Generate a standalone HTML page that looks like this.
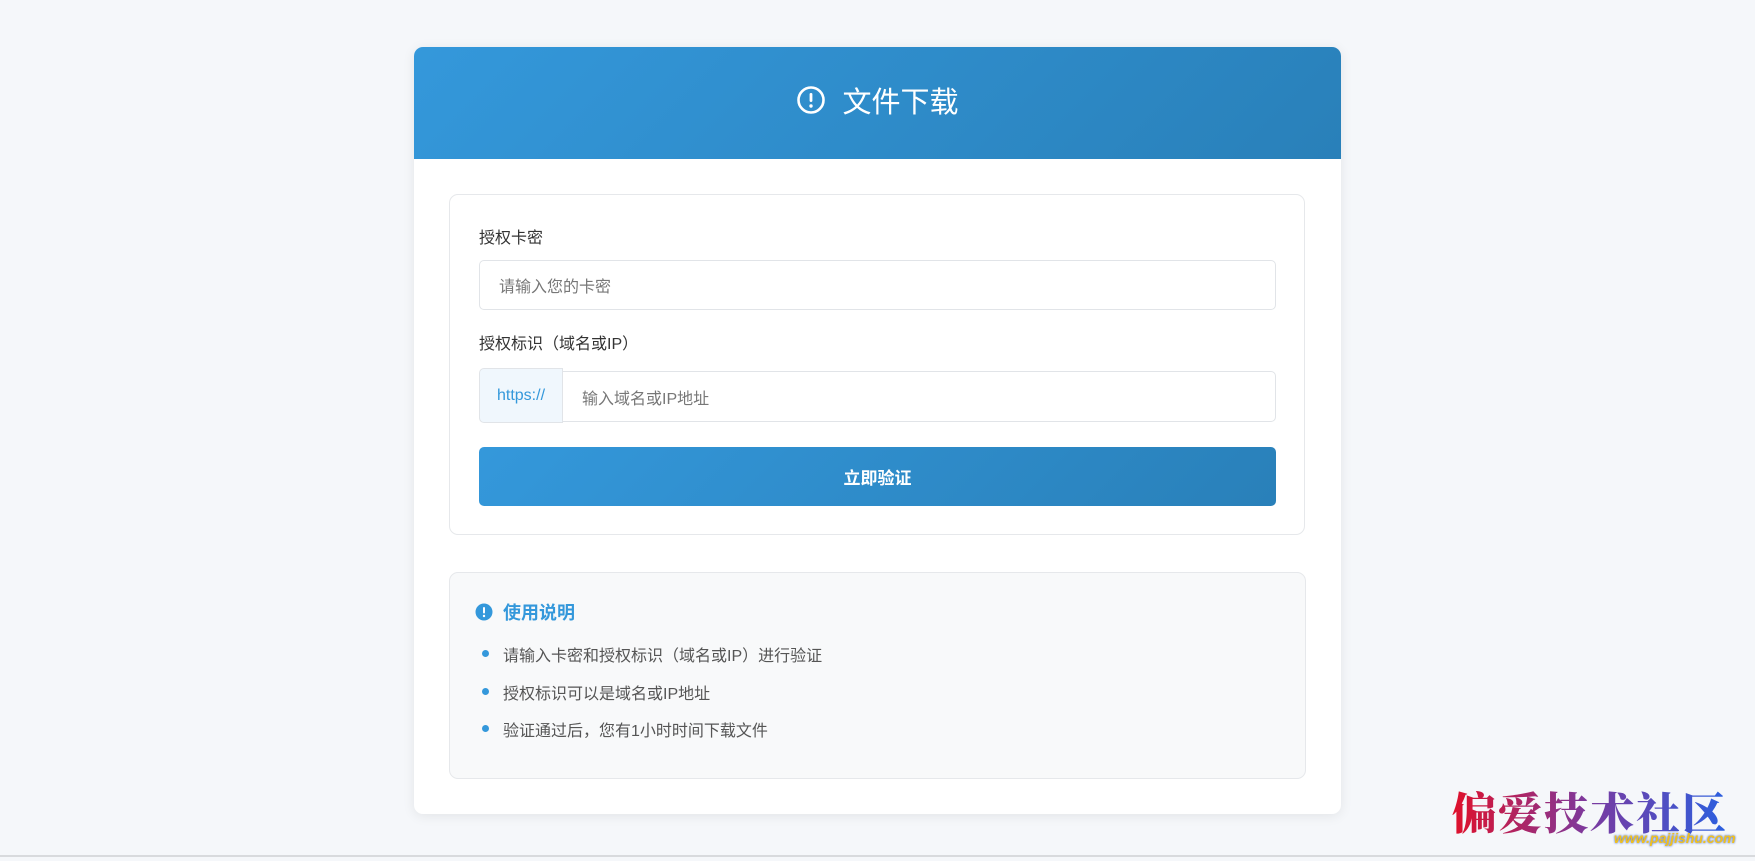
<!DOCTYPE html>
<html><head><meta charset="utf-8"><style>
*{box-sizing:border-box;margin:0;padding:0}
body{width:1755px;height:861px;background:#f5f7fa;font-family:"Liberation Sans","Noto Sans CJK SC",sans-serif;position:relative;overflow:hidden}
.card{position:absolute;left:414px;top:47px;width:927px;height:767px;background:#fff;border-radius:9px;box-shadow:0 2px 12px rgba(0,0,0,.08);overflow:hidden}
.hdr{height:112px;padding-bottom:6px;background:linear-gradient(135deg,#3498db,#2980b9);color:#fff;display:flex;align-items:center;justify-content:center;font-size:29px;gap:16px}
.box{position:absolute;left:35px;top:147px;width:856px;height:341px;border:1px solid #e6e8eb;border-radius:9px}
.lbl{position:absolute;left:29px;font-size:16px;color:#333;line-height:20px}
.inp{position:absolute;left:29px;width:797px;border:1px solid #e1e4e8;border-radius:5px;font-size:16px;color:#777;display:flex;align-items:center}
.btn{position:absolute;left:29px;top:252px;width:797px;height:59px;border-radius:5px;background:linear-gradient(135deg,#3498db,#2980b9);color:#fff;font-size:17px;font-weight:bold;display:flex;align-items:center;justify-content:center}
.info{position:absolute;left:35px;top:525px;width:857px;height:207px;background:#f8f9fa;border:1px solid #e6e8eb;border-radius:9px}
.info h3{position:absolute;left:25px;top:26px;font-size:18px;color:#3498db;display:flex;align-items:center;gap:10px}
.info li{position:absolute;left:53px;list-style:none;font-size:16px;color:#555}
.info li:before{content:"";position:absolute;left:-21px;top:8px;width:7px;height:7px;border-radius:50%;background:#3498db}
.wm{position:absolute;left:1452px;top:778px;font-family:"Noto Serif CJK SC",serif;font-weight:900;font-size:44px;letter-spacing:2px;background:linear-gradient(90deg,#e0102a,#7a3aa0,#2a60e0);-webkit-background-clip:text;color:transparent}
.wm2{position:absolute;left:1614px;top:830px;font-size:14px;font-weight:bold;font-style:italic;color:#f0c020;text-shadow:0 0 2px #2050c0}
</style></head><body>
<div class="card">
<div class="hdr"><svg width="30" height="30" viewBox="0 0 30 30"><circle cx="15" cy="15" r="12.5" fill="none" stroke="#fff" stroke-width="2.6"/><rect x="13.6" y="8" width="2.8" height="9" rx="1.2" fill="#fff"/><circle cx="15" cy="21" r="1.7" fill="#fff"/></svg><span>文件下载</span></div>
<div class="box">
<div class="lbl" style="top:34px">授权卡密</div>
<div class="inp" style="top:65px;height:50px;padding-left:19px">请输入您的卡密</div>
<div class="lbl" style="top:140px">授权标识（域名或IP）</div>
<div class="inp" style="top:176px;height:51px">
<div style="width:84px;height:55px;margin-top:-2px;margin-left:-1px;background:#f0f7fd;border:1px solid #e1e4e8;border-radius:5px 0 0 5px;color:#3498db;font-size:16px;display:flex;align-items:center;justify-content:center">https://</div>
<span style="margin-left:19px">输入域名或IP地址</span></div>
<div class="btn">立即验证</div>
</div>
<div class="info">
<h3><svg width="18" height="18" viewBox="0 0 18 18"><circle cx="9" cy="9" r="8.5" fill="#3498db"/><rect x="8" y="4" width="2" height="6.5" rx="1" fill="#fff"/><circle cx="9" cy="13" r="1.2" fill="#fff"/></svg>使用说明</h3>
<li style="top:69px">请输入卡密和授权标识（域名或IP）进行验证</li>
<li style="top:107px">授权标识可以是域名或IP地址</li>
<li style="top:144px">验证通过后，您有1小时时间下载文件</li>
</div>
</div>
<div style="position:absolute;left:0;top:855px;width:1755px;height:2px;background:#d8dadd"></div>
<div class="wm">偏爱技术社区</div>
<div class="wm2">www.pajjishu.com</div>
</body></html>
